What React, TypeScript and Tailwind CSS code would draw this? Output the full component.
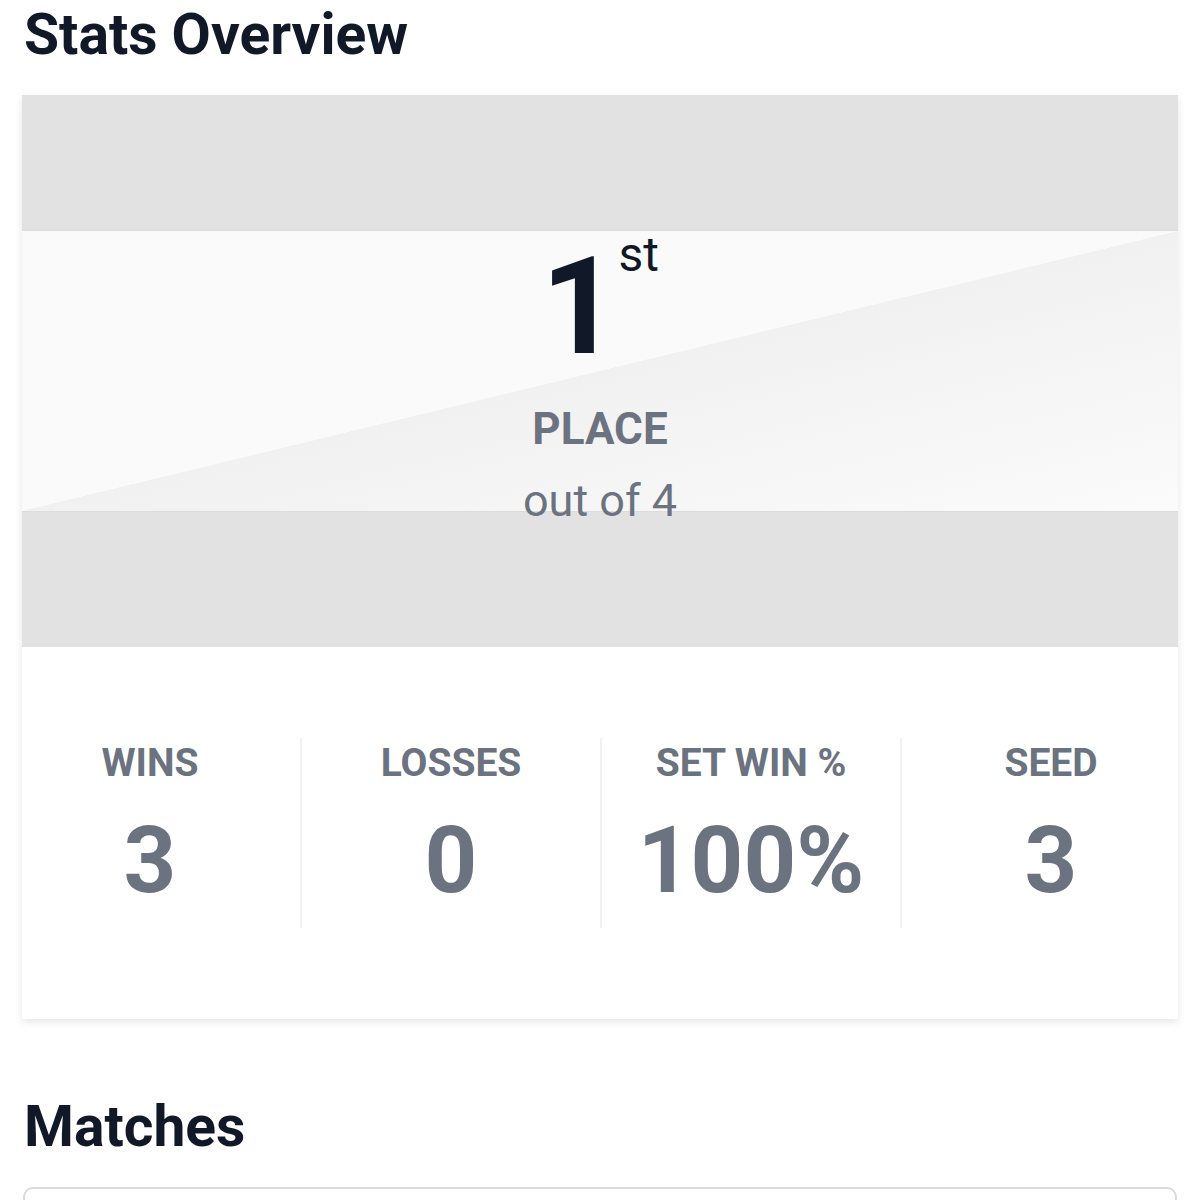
import React from 'react';

interface Stat {
  label: string;
  value: string;
}

const stats: Stat[] = [
  { label: 'WINS', value: '3' },
  { label: 'LOSSES', value: '0' },
  { label: 'SET WIN %', value: '100%' },
  { label: 'SEED', value: '3' },
];

const App: React.FC = () => {
  return (
    <div className="min-h-screen bg-white px-[22px] pt-[6px] font-['Roboto',sans-serif]">
      <h2 className="pl-[2px] text-[57px] font-bold leading-none text-[#111827]">Stats Overview</h2>

      {/* Standing card */}
      <div className="mt-[32px] bg-white shadow-[0_3px_8px_rgba(0,0,0,0.1)]">
        <div className="bg-[#e2e2e2] py-[135px]">
          <div className="flex h-[282px] flex-col items-center border-y border-[#dcdcdc] bg-linear-to-br from-[#fafafa] from-50% via-[#f1f1f1] via-50% to-[#fbfbfb] pt-[9px]">
            <div className="flex items-start">
              <span className="text-[135px] font-bold leading-none text-[#111827]">1</span>
              <span className="-mt-[9px] text-[48px] leading-none text-[#111827]">st</span>
            </div>
            <div className="mt-[32px] text-[44px] font-bold leading-none text-[#6b7280]">PLACE</div>
            <div className="mt-[27px] text-[45px] leading-none text-[#6b7280]">out of 4</div>
          </div>
        </div>

        <div className="py-[91px]">
          <div className="-mx-[22px] grid grid-cols-4">
            {stats.map((s, i) => (
              <div
                key={s.label}
                className={`flex h-[190px] flex-col items-center pt-[1px] ${i > 0 ? 'border-l-2 border-[#f1f1f1]' : ''}`}
              >
                <span className="text-[39px] font-bold leading-[48px] text-[#6b7280]">{s.label}</span>
                <span className="mt-[28px] text-[92px] font-bold leading-none text-[#6b7280]">{s.value}</span>
              </div>
            ))}
          </div>
        </div>
      </div>

      <h2 className="mt-[79px] pl-[2px] text-[57px] font-bold leading-none text-[#111827]">Matches</h2>

      <div className="mt-[32px] mx-[1px] h-[240px] rounded-[10px] border-2 border-[#dadada] bg-white" />
    </div>
  );
};

export default App;
